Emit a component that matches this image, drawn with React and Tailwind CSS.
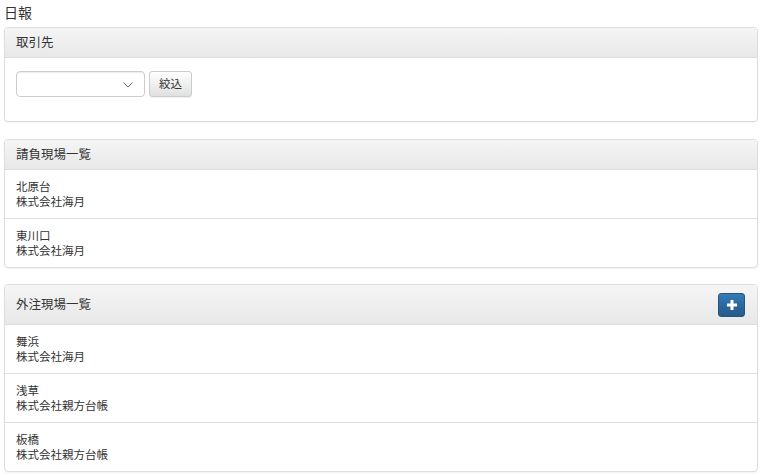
import React from "react";

const font = { fontFamily: '"Noto Sans CJK JP", "Noto Sans", sans-serif' };

function Panel({ title, action, children, headerClass = "h-[30px]" }) {
  return (
    <div className="ml-[4px] mr-[3px] border border-[#dddddd] rounded-[4px] bg-white shadow-[0_1px_2px_rgba(0,0,0,0.05)] overflow-hidden">
      <div
        className={`flex items-center justify-between pl-[11px] pr-[12px] border-b border-[#dddddd] bg-gradient-to-b from-[#f5f5f5] to-[#e8e8e8] ${headerClass}`}
      >
        <span className="text-[12.5px] text-[#333333] leading-none">{title}</span>
        {action}
      </div>
      {children}
    </div>
  );
}

function Item({ name, company, last }) {
  return (
    <div className={`pl-[11px] pt-[9px] ${last ? "h-[48px]" : "h-[49px] border-b border-[#dddddd]"}`}>
      <div className="text-[11.5px] leading-[15px] text-[#333333]">{name}</div>
      <div className="text-[11.5px] leading-[15px] text-[#333333]">{company}</div>
    </div>
  );
}

export default function App() {
  return (
    <div className="bg-white w-[761px] h-[475px] text-[#333333]" style={font}>
      <div className="pl-[4px] pt-[2px] h-[27px] text-[14px] leading-[20px]">日報</div>

      <Panel title="取引先">
        <div className="flex items-center gap-[4px] pl-[11px] pt-[13px] pb-[24px]">
          <div className="relative w-[129px] h-[26px] border border-[#cccccc] rounded-[4px] bg-white shadow-[inset_0_1px_1px_rgba(0,0,0,0.075)]">
            <svg className="absolute right-[11px] top-[10px]" width="10" height="6" viewBox="0 0 10 6">
              <path d="M0.5 0.5 L5 5 L9.5 0.5" fill="none" stroke="#666" strokeWidth="1" />
            </svg>
          </div>
          <button className="h-[26px] w-[43px] border border-[#cccccc] rounded-[3px] bg-gradient-to-b from-[#ffffff] to-[#e0e0e0] text-[11.5px] text-[#333333] shadow-[0_1px_0_rgba(0,0,0,0.05)]">
            絞込
          </button>
        </div>
      </Panel>

      <div className="h-[17px]" />

      <Panel title="請負現場一覧">
        <Item name="北原台" company="株式会社海月" />
        <Item name="東川口" company="株式会社海月" last />
      </Panel>

      <div className="h-[16px]" />

      <Panel
        title="外注現場一覧"
        headerClass="h-[40px]"
        action={
          <button className="w-[27px] h-[24px] rounded-[3px] border border-[#245580] bg-gradient-to-b from-[#337ab7] to-[#265a88] flex items-center justify-center">
            <svg width="10" height="10" viewBox="0 0 10 10">
              <path d="M3.5 0 H6.5 V3.5 H10 V6.5 H6.5 V10 H3.5 V6.5 H0 V3.5 H3.5 Z" fill="#ffffff" />
            </svg>
          </button>
        }
      >
        <Item name="舞浜" company="株式会社海月" />
        <Item name="浅草" company="株式会社親方台帳" />
        <Item name="板橋" company="株式会社親方台帳" last />
      </Panel>
    </div>
  );
}
